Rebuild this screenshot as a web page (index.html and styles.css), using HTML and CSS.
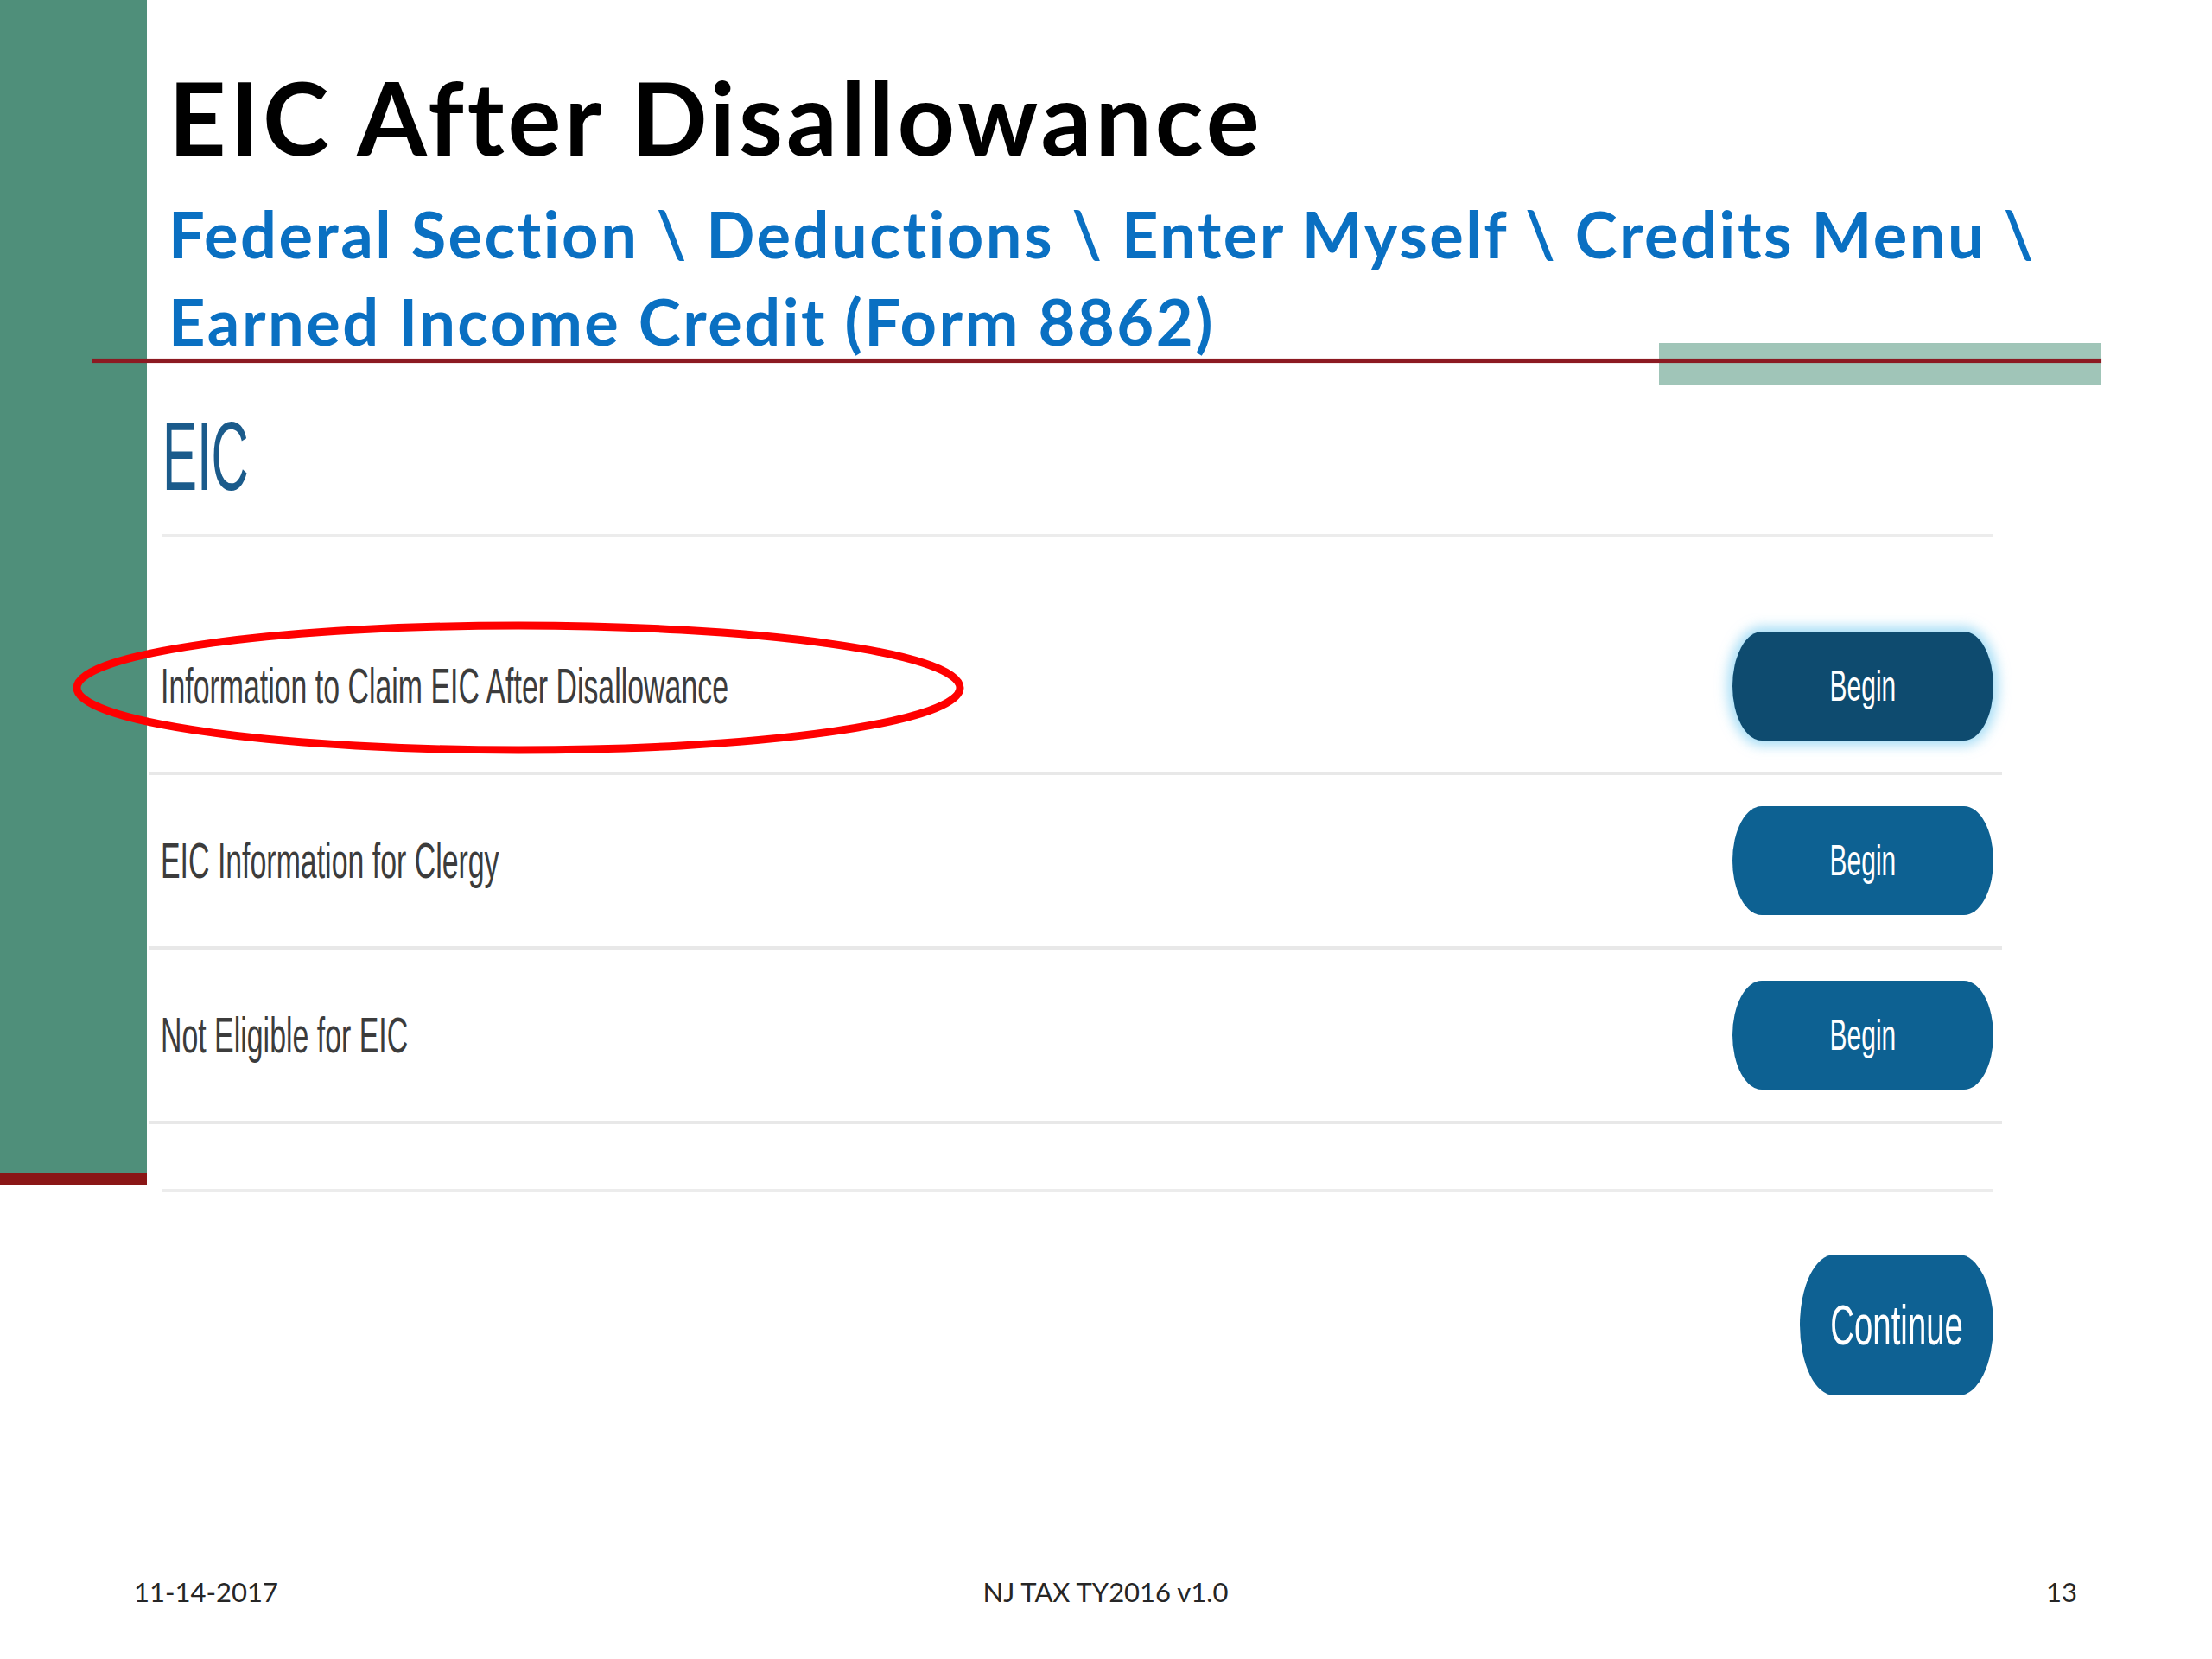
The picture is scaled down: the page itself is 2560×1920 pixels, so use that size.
FILE: index.html
```html
<!DOCTYPE html>
<html lang="en">
<head>
<meta charset="utf-8">
<title>EIC After Disallowance</title>
<link rel="stylesheet" href="styles.css">
</head>
<body>
<div class="slide">
  <div class="top">
    <aside class="sidebar"></aside>
    <main class="main">
      <header class="head">
        <h1 class="title">EIC After Disallowance</h1>
        <p class="path">Federal Section \ Deductions \ Enter Myself \ Credits Menu \<br>Earned Income Credit (Form 8862)</p>
      </header>
      <div class="rule"><span class="rule-accent"></span></div>
      <section class="app">
        <h2 class="app-title"><span class="sq sq-title">EIC</span></h2>
        <div class="app-rule"></div>
        <div class="rows">
          <div class="row">
            <span class="row-label"><span class="sq">Information to Claim EIC After Disallowance</span></span>
            <button class="btn btn-active"><span class="sq-c">Begin</span></button>
          </div>
          <div class="row">
            <span class="row-label"><span class="sq">EIC Information for Clergy</span></span>
            <button class="btn"><span class="sq-c">Begin</span></button>
          </div>
          <div class="row">
            <span class="row-label"><span class="sq">Not Eligible for EIC</span></span>
            <button class="btn"><span class="sq-c">Begin</span></button>
          </div>
        </div>
        <div class="app-rule app-rule-bottom"></div>
        <div class="actions">
          <button class="btn-continue"><span class="sq-c">Continue</span></button>
        </div>
      </section>
    </main>
  </div>
  <footer class="footer">
    <span class="foot-left">11-14-2017</span>
    <span class="foot-mid">NJ TAX TY2016 v1.0</span>
    <span class="foot-right">13</span>
  </footer>
  <svg class="callout" width="1040" height="160" viewBox="0 0 1040 160" aria-hidden="true">
    <ellipse cx="518" cy="78" rx="511" ry="72" fill="none" stroke="#ff0000" stroke-width="9"/>
  </svg>
</div>
</body>
</html>
```

FILE: styles.css
```css
html, body {
  margin: 0;
  padding: 0;
  background: #ffffff;
}

.slide {
  position: relative;
  width: 2560px;
  height: 1920px;
  background: #ffffff;
  overflow: hidden;
  display: flex;
  flex-direction: column;
}

.top {
  display: grid;
  grid-template-columns: 170px 1fr;
  align-items: start;
}

.sidebar {
  height: 1358px;
  background: #4f8f7a;
  border-bottom: 13px solid #8a1616;
}

.main {
  display: flex;
  flex-direction: column;
  min-width: 0;
}

.head {
  padding-left: 25px;
  padding-top: 78px;
}

.title {
  margin: 0;
  font-family: Lato, "Open Sans", sans-serif;
  font-weight: 700;
  font-size: 116px;
  letter-spacing: 4px;
  font-variant-ligatures: none;
  line-height: 1;
  color: #000000;
  white-space: nowrap;
}

.path {
  margin: 26px 0 -25px 0;
  font-family: Lato, "Open Sans", sans-serif;
  font-weight: 700;
  font-size: 74px;
  letter-spacing: 2.5px;
  font-variant-ligatures: none;
  line-height: 101px;
  color: #0a70c2;
  white-space: nowrap;
}

.rule {
  position: relative;
  z-index: 1;
  margin-left: -63px;
  width: 2325px;
  height: 48px;
  display: flex;
  justify-content: flex-end;
}

.rule::after {
  content: "";
  position: absolute;
  left: 0;
  right: 0;
  top: 18px;
  height: 5px;
  background: #8c1a22;
  box-shadow: 0 0 1px rgba(140, 26, 34, 0.5);
}

.rule-accent {
  width: 512px;
  height: 48px;
  background: #a0c5b8;
}

.app {
  display: flex;
  flex-direction: column;
}

.app-title {
  margin: 27px 0 0 18px;
  font-family: "Liberation Sans", Arial, sans-serif;
  font-weight: 400;
  font-size: 113px;
  line-height: 1;
  color: #1b5b8b;
  height: 113px;
}

.sq {
  display: inline-block;
  white-space: nowrap;
  transform: scaleX(0.584);
  transform-origin: left center;
}

.sq-title {
  transform: scaleX(0.53);
}

.sq-c {
  display: inline-block;
  white-space: nowrap;
  transform: scaleX(0.6);
  transform-origin: center center;
}

.app-rule {
  margin: 33px 253px 0 18px;
  height: 4px;
  background: #ececec;
}

.app-rule-bottom {
  margin-top: 75px;
}

.rows {
  margin: 73px 243px 0 3px;
  display: flex;
  flex-direction: column;
}

.row {
  height: 198px;
  border-bottom: 4px solid #e8e8e8;
  display: flex;
  align-items: center;
  justify-content: space-between;
  padding: 0 10px 0 13px;
}

.row-label {
  font-family: "Liberation Sans", Arial, sans-serif;
  font-size: 58px;
  color: #3c3c3c;
  line-height: 1;
}

.btn {
  width: 302px;
  height: 126px;
  border: none;
  border-radius: 34px / 63px;
  background: #0d6192;
  color: #ffffff;
  font-family: "Liberation Sans", Arial, sans-serif;
  font-size: 50px;
  line-height: 1;
  padding: 0;
  display: flex;
  align-items: center;
  justify-content: center;
}

.btn-active {
  background: #0e4b6f;
  box-shadow: 0 0 14px 6px rgba(110, 200, 240, 0.6);
}

.actions {
  margin: 72px 253px 0 0;
  display: flex;
  justify-content: flex-end;
}

.btn-continue {
  width: 224px;
  height: 163px;
  border: none;
  border-radius: 40px / 82px;
  background: #0e6193;
  color: #ffffff;
  font-family: "Liberation Sans", Arial, sans-serif;
  font-size: 64px;
  line-height: 1;
  padding: 0;
  display: flex;
  align-items: center;
  justify-content: center;
}

.btn-continue .sq-c {
  transform: scaleX(0.6);
}

.footer {
  margin-top: 212px;
  display: grid;
  grid-template-columns: 1fr auto 1fr;
  padding: 0 156px 0 155px;
  font-family: Lato, "Open Sans", sans-serif;
  font-size: 31px;
  line-height: 1;
  color: #262626;
}

.foot-left {
  justify-self: start;
}

.foot-right {
  justify-self: end;
}

.callout {
  position: absolute;
  left: 82px;
  top: 718px;
  z-index: 2;
}
```
